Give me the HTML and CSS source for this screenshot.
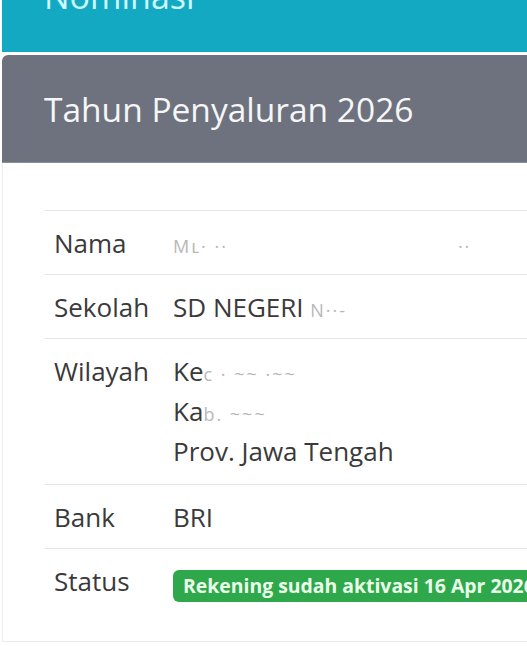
FILE: index.html
```html
<!DOCTYPE html>
<html lang="id">
<head>
<meta charset="utf-8">
<title>Nominasi</title>
<link rel="stylesheet" href="styles.css">
</head>
<body>
<div class="page">
  <div class="nominasi"><span class="nominasi-title">Nominasi</span></div>
  <div class="card">
    <div class="card-head">Tahun Penyaluran 2026</div>
    <div class="card-body">
      <table class="info">
        <tr>
          <td class="label">Nama</td>
          <td class="value"><span class="faint">Mʟ· ··</span><span class="faint spread">··</span></td>
        </tr>
        <tr>
          <td class="label">Sekolah</td>
          <td class="value">SD NEGERI <span class="faint">N··-</span></td>
        </tr>
        <tr class="multi">
          <td class="label">Wilayah</td>
          <td class="value">
            <div>Ke<span class="faint">c · ~~ ·~~</span></div>
            <div>Ka<span class="faint">b. ~~~</span></div>
            <div>Prov. Jawa Tengah</div>
          </td>
        </tr>
        <tr>
          <td class="label">Bank</td>
          <td class="value">BRI</td>
        </tr>
        <tr>
          <td class="label">Status</td>
          <td class="value"><span class="badge">Rekening sudah aktivasi 16 Apr 2026</span></td>
        </tr>
      </table>
    </div>
  </div>
</div>
</body>
</html>
```
FILE: styles.css
```css
html, body {
  margin: 0;
  padding: 0;
  background: #ffffff;
  overflow: hidden;
}
.page {
  width: 640px;
  font-family: "Open Sans", "Noto Sans", sans-serif;
  color: #3a3a3a;
}
.nominasi {
  height: 52px;
  margin-left: 2px;
  background: #14a9c3;
  overflow: hidden;
}
.nominasi-title {
  display: block;
  margin-top: -27px;
  padding-left: 42px;
  font-size: 34px;
  line-height: 46px;
  color: #cdf8ff;
}
.card {
  margin-top: 3px;
  margin-left: 2px;
  border-top-left-radius: 6px;
  overflow: hidden;
}
.card-head {
  height: 108px;
  display: flex;
  align-items: center;
  padding-left: 42px;
  background: #6d727e;
  border-bottom: 1px solid #8a8f99;
  box-sizing: border-box;
  color: #f6f6f6;
  font-size: 33.5px;
}
.card-body {
  border-left: 1px solid #ececec;
  border-bottom: 1px solid #ececec;
  padding: 47px 0 28px 42px;
}
.info {
  border-collapse: collapse;
  width: 600px;
  font-size: 26px;
  line-height: 40px;
}
.info td {
  border-top: 1px solid #e6e6e6;
  padding: 12px 0 11px 9px;
  vertical-align: top;
}
.info .multi td {
  padding-bottom: 13px;
}
.info .label {
  width: 119px;
}
.info .value {
  padding-left: 0;
}
.faint {
  color: #b8b8b8;
  font-size: 18px;
  line-height: 1;
  letter-spacing: 2px;
}
.spread {
  margin-left: 230px;
}
.badge {
  display: inline-block;
  vertical-align: -2px;
  background: #2ea84a;
  color: #eaffea;
  font-weight: 700;
  font-size: 19.4px;
  line-height: 32px;
  padding: 0 10px;
  border-radius: 6px;
  white-space: nowrap;
}
```
